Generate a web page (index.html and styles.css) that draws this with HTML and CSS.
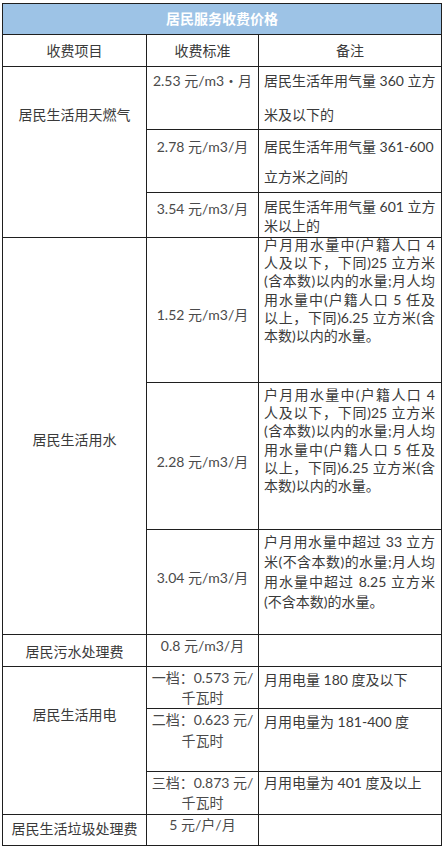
FILE: index.html
```html
<!DOCTYPE html>
<html lang="zh-CN">
<head>
<meta charset="utf-8">
<title>居民服务收费价格</title>
<link rel="stylesheet" href="styles.css">
</head>
<body>
<table class="fees">
  <colgroup>
    <col class="col-item">
    <col class="col-price">
    <col class="col-note">
  </colgroup>
  <tr class="r-title"><th colspan="3">居民服务收费价格</th></tr>
  <tr class="r-head"><th>收费项目</th><th>收费标准</th><th>备注</th></tr>

  <tr class="r-gas1">
    <td rowspan="3" class="item pt38">居民生活用天燃气</td>
    <td class="price pt4">2.53 元/m3・月</td>
    <td class="note pt4"><div class="lines gap14"><div class="ln">居民生活年用气量 360 立方</div><div class="ln">米及以下的</div></div></td>
  </tr>
  <tr class="r-gas2">
    <td class="price pt7">2.78 元/m3/月</td>
    <td class="note pt7"><div class="lines gap10"><div class="ln">居民生活年用气量 361-600</div><div class="ln">立方米之间的</div></div></td>
  </tr>
  <tr class="r-gas3">
    <td class="price pt6">3.54 元/m3/月</td>
    <td class="note pt4"><div class="lines lh19"><div class="ln">居民生活年用气量 601 立方</div><div class="ln">米以上的</div></div></td>
  </tr>

  <tr class="r-w1">
    <td rowspan="3" class="item pt192">居民生活用水</td>
    <td class="price pt67">1.52 元/m3/月</td>
    <td class="note"><div class="lines lh18 up2">
      <div class="ln j">户月用水量中(户籍人口 4</div>
      <div class="ln j">人及以下，下同)25 立方米</div>
      <div class="ln j">(含本数)以内的水量;月人均</div>
      <div class="ln j">用水量中(户籍人口 5 任及</div>
      <div class="ln j">以上，下同)6.25 立方米(含</div>
      <div class="ln">本数)以内的水量。</div>
    </div></td>
  </tr>
  <tr class="r-w2">
    <td class="price pt69">2.28 元/m3/月</td>
    <td class="note pt3"><div class="lines lh18">
      <div class="ln j">户月用水量中(户籍人口 4</div>
      <div class="ln j">人及以下，下同)25 立方米</div>
      <div class="ln j">(含本数)以内的水量;月人均</div>
      <div class="ln j">用水量中(户籍人口 5 任及</div>
      <div class="ln j">以上，下同)6.25 立方米(含</div>
      <div class="ln">本数)以内的水量。</div>
    </div></td>
  </tr>
  <tr class="r-w3">
    <td class="price pt38">3.04 元/m3/月</td>
    <td class="note pt2"><div class="lines">
      <div class="ln j">户月用水量中超过 33 立方</div>
      <div class="ln j">米(不含本数)的水量;月人均</div>
      <div class="ln j">用水量中超过 8.25 立方米</div>
      <div class="ln">(不含本数)的水量。</div>
    </div></td>
  </tr>

  <tr class="r-sewage">
    <td class="item pt7">居民污水处理费</td>
    <td class="price pt1">0.8 元/m3/月</td>
    <td class="note"></td>
  </tr>

  <tr class="r-e1">
    <td rowspan="3" class="item pt38">居民生活用电</td>
    <td class="price pt1"><div class="lines"><div class="ln">一档：0.573 元/</div><div class="ln">千瓦时</div></div></td>
    <td class="note pt3">月用电量 180 度及以下</td>
  </tr>
  <tr class="r-e2">
    <td class="price"><div class="lines lh21"><div class="ln">二档：0.623 元/</div><div class="ln">千瓦时</div></div></td>
    <td class="note pt3">月用电量为 181-400 度</td>
  </tr>
  <tr class="r-e3">
    <td class="price pt1"><div class="lines"><div class="ln">三档：0.873 元/</div><div class="ln">千瓦时</div></div></td>
    <td class="note pt1">月用电量为 401 度及以上</td>
  </tr>

  <tr class="r-garbage">
    <td class="item pt4">居民生活垃圾处理费</td>
    <td class="price">5 元/户/月</td>
    <td class="note"></td>
  </tr>
</table>
</body>
</html>
```

FILE: styles.css
```css
body {
  margin: 0;
  background: #ffffff;
  font-family: "Lato", "Noto Sans CJK SC", sans-serif;
  font-size: 14px;
  color: #404040;
}

.fees {
  border-collapse: collapse;
  table-layout: fixed;
  width: 440px;
  margin: 3px 0 0 2px;
}

.col-item { width: 144px; }
.col-price { width: 112px; }
.col-note { width: 183px; }

.fees th,
.fees td {
  border: 1px solid #1f1f1f;
  padding: 0 5px;
  vertical-align: top;
  font-weight: normal;
  line-height: 20px;
}

.r-title { height: 31px; }
.r-head { height: 32px; }
.r-gas1 { height: 63px; }
.r-gas2 { height: 63px; }
.r-gas3 { height: 45px; }
.r-w1 { height: 145px; }
.r-w2 { height: 147px; }
.r-w3 { height: 105px; }
.r-sewage { height: 32px; }
.r-e1 { height: 42px; }
.r-e2 { height: 63px; }
.r-e3 { height: 43px; }
.r-garbage { height: 31px; }

.fees .r-title th {
  background: #9dc3e6;
  color: #ffffff;
  font-weight: bold;
  text-align: center;
  vertical-align: middle;
}

.fees .r-head th {
  text-align: center;
  vertical-align: middle;
  color: #3a3a3a;
}

.fees .item { text-align: center; color: #3a3a3a; }
.fees .price { text-align: center; padding-left: 2px; padding-right: 2px; color: #4a4a4a; }
.fees .note { padding-left: 5px; padding-right: 6px; color: #3a3a3a; }

.lines { display: flex; flex-direction: column; }
.ln { white-space: nowrap; }
.ln.j { white-space: normal; text-align: justify; text-align-last: justify; }

.gap14 { gap: 14px; }
.gap10 { gap: 10px; }
.lh18 { line-height: 18.2px; }
.lh19 { line-height: 19px; }
.lh21 { line-height: 21px; }
.up2 { margin-top: -2px; }

.fees .pt1 { padding-top: 1px; }
.fees .pt2 { padding-top: 2px; }
.fees .pt3 { padding-top: 3px; }
.fees .pt4 { padding-top: 4px; }
.fees .pt6 { padding-top: 6px; }
.fees .pt7 { padding-top: 7px; }
.fees .pt38 { padding-top: 38px; }
.fees .pt67 { padding-top: 67px; }
.fees .pt69 { padding-top: 69px; }
.fees .pt192 { padding-top: 192px; }
```
